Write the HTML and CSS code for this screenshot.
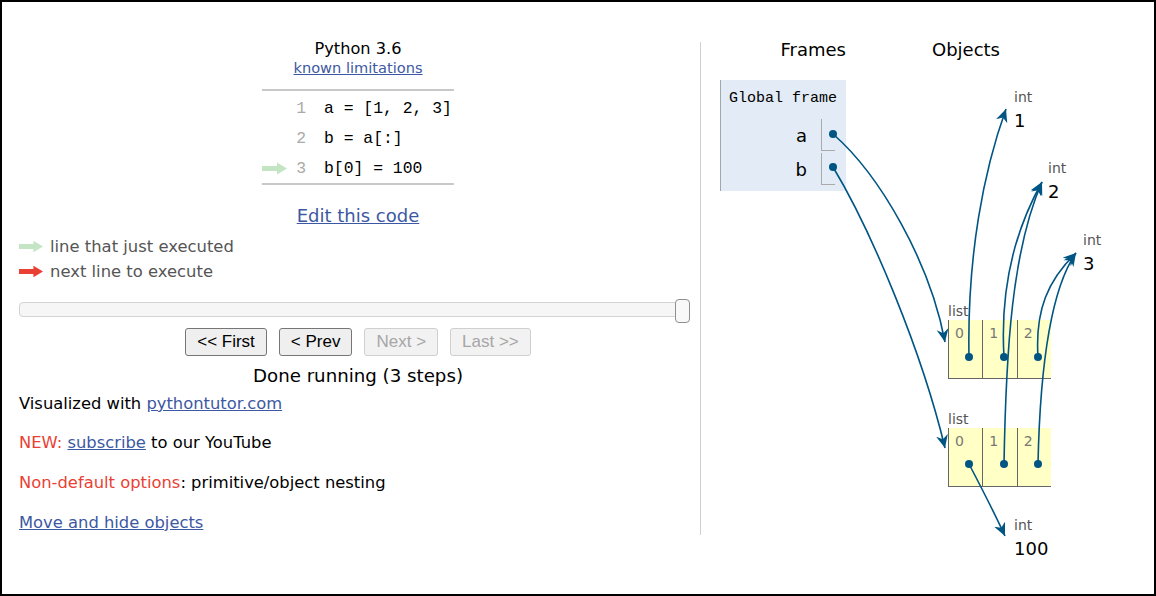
FILE: index.html
```html
<!DOCTYPE html>
<html>
<head>
<meta charset="utf-8">
<link rel="stylesheet" href="styles.css">
</head>
<body>
<div class="shot">
  <div class="left">
    <div class="lang">Python 3.6</div>
    <a class="limits" href="#">known limitations</a>
    <div class="code">
      <div class="cline"><span class="arr"></span><span class="num">1</span><span class="src">a = [1, 2, 3]</span></div>
      <div class="cline"><span class="arr"></span><span class="num">2</span><span class="src">b = a[:]</span></div>
      <div class="cline"><span class="arr"><svg width="25" height="13" viewBox="0 0 25 13"><polygon points="0,4 15,4 15,0.5 25,6.5 15,12.5 15,9 0,9" fill="#c3e5c3"/></svg></span><span class="num">3</span><span class="src">b[0] = 100</span></div>
    </div>
    <a class="edit" href="#">Edit this code</a>
    <div class="legend">
      <div class="leg"><svg width="24" height="13" viewBox="0 0 25 13"><polygon points="0,4 15,4 15,0.5 25,6.5 15,12.5 15,9 0,9" fill="#c3e5c3"/></svg><span>line that just executed</span></div>
      <div class="leg"><svg width="24" height="13" viewBox="0 0 25 13"><polygon points="0,4 15,4 15,0.5 25,6.5 15,12.5 15,9 0,9" fill="#e93f34"/></svg><span>next line to execute</span></div>
    </div>
    <div class="slider"><div class="track"></div><div class="thumb"></div></div>
    <div class="buttons">
      <button class="btn">&lt;&lt; First</button>
      <button class="btn">&lt; Prev</button>
      <button class="btn" disabled>Next &gt;</button>
      <button class="btn" disabled>Last &gt;&gt;</button>
    </div>
    <div class="status">Done running (3 steps)</div>
    <p class="info first">Visualized with <a href="#">pythontutor.com</a></p>
    <p class="info second"><span class="red">NEW:</span> <a href="#">subscribe</a> to our YouTube</p>
    <p class="info"><span class="red">Non-default options</span>: primitive/object nesting</p>
    <p class="info"><a href="#">Move and hide objects</a></p>
  </div>
  <div class="divider"></div>
  <div class="right">
    <div class="headers">
      <div class="h-frames">Frames</div>
      <div class="h-objects">Objects</div>
    </div>
    <div class="gframe">
      <div class="gtitle">Global frame</div>
      <div class="var first-var"><span class="vname">a</span><span class="vcell"></span></div>
      <div class="var"><span class="vname">b</span><span class="vcell"></span></div>
    </div>

    <div class="obj prim int1"><div class="tlabel">int</div><div class="pval">1</div></div>
    <div class="obj prim int2"><div class="tlabel">int</div><div class="pval">2</div></div>
    <div class="obj prim int3"><div class="tlabel">int</div><div class="pval">3</div></div>
    <div class="obj list list1"><div class="tlabel">list</div><div class="cells"><div class="cell">0</div><div class="cell">1</div><div class="cell">2</div></div></div>
    <div class="obj list list2"><div class="tlabel">list</div><div class="cells"><div class="cell">0</div><div class="cell">1</div><div class="cell">2</div></div></div>
    <div class="obj prim int100"><div class="tlabel">int</div><div class="pval">100</div></div>

    <svg class="wires" width="453" height="592" viewBox="701 2 453 592">
      <defs>
        <marker id="ah" markerUnits="userSpaceOnUse" markerWidth="15" markerHeight="13" refX="13" refY="6" orient="auto">
          <path d="M0,0 L13,6 L0,12 L4,6 Z" fill="#005583"/>
        </marker>
      </defs>
      <g fill="none" stroke="#005583" stroke-width="1.6">
        <path d="M833,134 C880,175 930,262 945,342" marker-end="url(#ah)"/>
        <path d="M833,167 C872,232 922,352 945,448" marker-end="url(#ah)"/>
        <path d="M969,357 C967,255 984,170 1006,109" marker-end="url(#ah)"/>
        <path d="M1004,357 C1000,290 1014,232 1042,182" marker-end="url(#ah)"/>
        <path d="M1004,464 C1006,350 1012,250 1042,182" marker-end="url(#ah)"/>
        <path d="M1038,357 C1035,310 1048,280 1076,253" marker-end="url(#ah)"/>
        <path d="M1038,464 C1040,370 1050,290 1076,253" marker-end="url(#ah)"/>
        <path d="M969,464 C980,485 994,512 1005,536" marker-end="url(#ah)"/>
      </g>
      <g fill="#005583">
        <circle cx="833" cy="134" r="4"/>
        <circle cx="833" cy="167" r="4"/>
        <circle cx="969" cy="357" r="4"/>
        <circle cx="1004" cy="357" r="4"/>
        <circle cx="1038" cy="357" r="4"/>
        <circle cx="969" cy="464" r="4"/>
        <circle cx="1004" cy="464" r="4"/>
        <circle cx="1038" cy="464" r="4"/>
      </g>
    </svg>
  </div>
</div>
</body>
</html>
```

FILE: styles.css
```css
html, body {
  margin: 0;
  padding: 0;
  background: #fff;
}
body {
  font-family: "DejaVu Sans", Verdana, sans-serif;
  color: #000;
}
a {
  color: #3d58a2;
  text-decoration: underline;
}
.shot {
  width: 1156px;
  height: 596px;
  box-sizing: border-box;
  border: 2px solid #000;
  display: flex;
  overflow: hidden;
}
.left {
  margin-left: 17px;
  width: 678px;
  padding-top: 37px;
  display: flex;
  flex-direction: column;
  align-items: center;
}
.lang {
  font-size: 16.2px;
  line-height: 20px;
}
.limits {
  font-size: 14.6px;
  line-height: 18px;
}
.code {
  margin-top: 12px;
  width: 192px;
  border-top: 2px solid #c8c8c8;
  border-bottom: 2px solid #c8c8c8;
  padding-top: 2px;
  font-family: "Liberation Mono", "DejaVu Sans Mono", monospace;
  font-size: 16.4px;
}
.cline {
  display: flex;
  align-items: center;
  height: 30px;
}
.arr {
  width: 28px;
  display: flex;
  align-items: center;
}
.num {
  width: 16px;
  text-align: right;
  color: #aaa;
}
.src {
  padding-left: 18px;
  white-space: pre;
}
.edit {
  margin-top: 20px;
  font-size: 18px;
  line-height: 22px;
}
.legend {
  align-self: stretch;
  margin-top: 7px;
}
.leg {
  display: flex;
  align-items: center;
  height: 25px;
  font-size: 16.4px;
  color: #555;
}
.leg svg {
  margin-right: 7px;
}
.slider {
  align-self: flex-start;
  position: relative;
  width: 671px;
  height: 24px;
  margin-top: 15px;
}
.track {
  margin-top: 3px;
  height: 15px;
  box-sizing: border-box;
  border: 1px solid #d3d3d3;
  border-radius: 4px;
  background: #f6f6f6;
}
.thumb {
  position: absolute;
  right: 0;
  top: 0;
  width: 15px;
  height: 24px;
  box-sizing: border-box;
  border: 1px solid #8f8f8f;
  border-radius: 4px;
  background: #f8f8f8;
}
.buttons {
  margin-top: 5px;
  display: flex;
  gap: 12px;
}
.btn {
  font-family: "Liberation Sans", Arial, sans-serif;
  font-size: 17px;
  height: 28px;
  padding: 0 11px;
  border: 1px solid #767676;
  border-radius: 3px;
  background: #efefef;
  color: #000;
}
.btn:disabled {
  border-color: #cfcfcf;
  background: #f2f2f2;
  color: #a6a6a6;
}
.status {
  margin-top: 9px;
  font-size: 18.2px;
  line-height: 22px;
}
.info {
  align-self: stretch;
  margin: 20px 0 0 0;
  font-size: 16.35px;
  line-height: 20px;
}
.info.first {
  margin-top: 7px;
}
.info.second {
  margin-top: 19px;
}
.red {
  color: #e93f34;
}
.divider {
  margin-left: 3px;
  margin-top: 40px;
  width: 1px;
  height: 493px;
  background: #d0d0d0;
}
.right {
  position: relative;
  flex: 1;
  padding-top: 37px;
}
.headers {
  display: flex;
  font-size: 18px;
  line-height: 22px;
}
.h-frames {
  width: 145px;
  text-align: right;
}
.h-objects {
  margin-left: 86px;
}
.gframe {
  margin-top: 19px;
  margin-left: 19px;
  width: 126px;
  box-sizing: border-box;
  border-left: 1px solid #a0a8ad;
  background: #e2ebf6;
  padding: 8px 6px 6px 8px;
}
.gtitle {
  font-family: "Liberation Mono", "DejaVu Sans Mono", monospace;
  font-size: 15px;
  line-height: 22px;
  white-space: nowrap;
}
.var {
  display: flex;
  justify-content: flex-end;
  align-items: center;
  height: 32px;
  margin-top: 2px;
  padding-right: 3px;
}
.var.first-var {
  margin-top: 9px;
}
.vname {
  font-size: 18px;
  padding-right: 14px;
}
.vcell {
  width: 13px;
  height: 31px;
  margin-right: 2px;
  border-left: 1px solid #aaa;
  border-bottom: 1px solid #aaa;
}
.obj {
  position: absolute;
}
.tlabel {
  font-size: 14px;
  line-height: 17px;
  color: #555;
}
.pval {
  font-size: 18px;
  line-height: 22px;
  margin-top: 4px;
}
.int1 { left: 313px; top: 87px; }
.int2 { left: 347px; top: 158px; }
.int3 { left: 382px; top: 230px; }
.int100 { left: 313px; top: 515px; }
.list1 { left: 247px; top: 301px; }
.list2 { left: 247px; top: 409px; }
.cells {
  display: flex;
}
.cell {
  width: 34.33px;
  height: 59px;
  box-sizing: border-box;
  border-left: 1px solid #666;
  border-bottom: 1px solid #666;
  background: #ffffc6;
  padding: 5px 0 0 6px;
  font-size: 14px;
  line-height: 17px;
  color: #777;
}
.wires {
  position: absolute;
  left: 0;
  top: 0;
}
```
